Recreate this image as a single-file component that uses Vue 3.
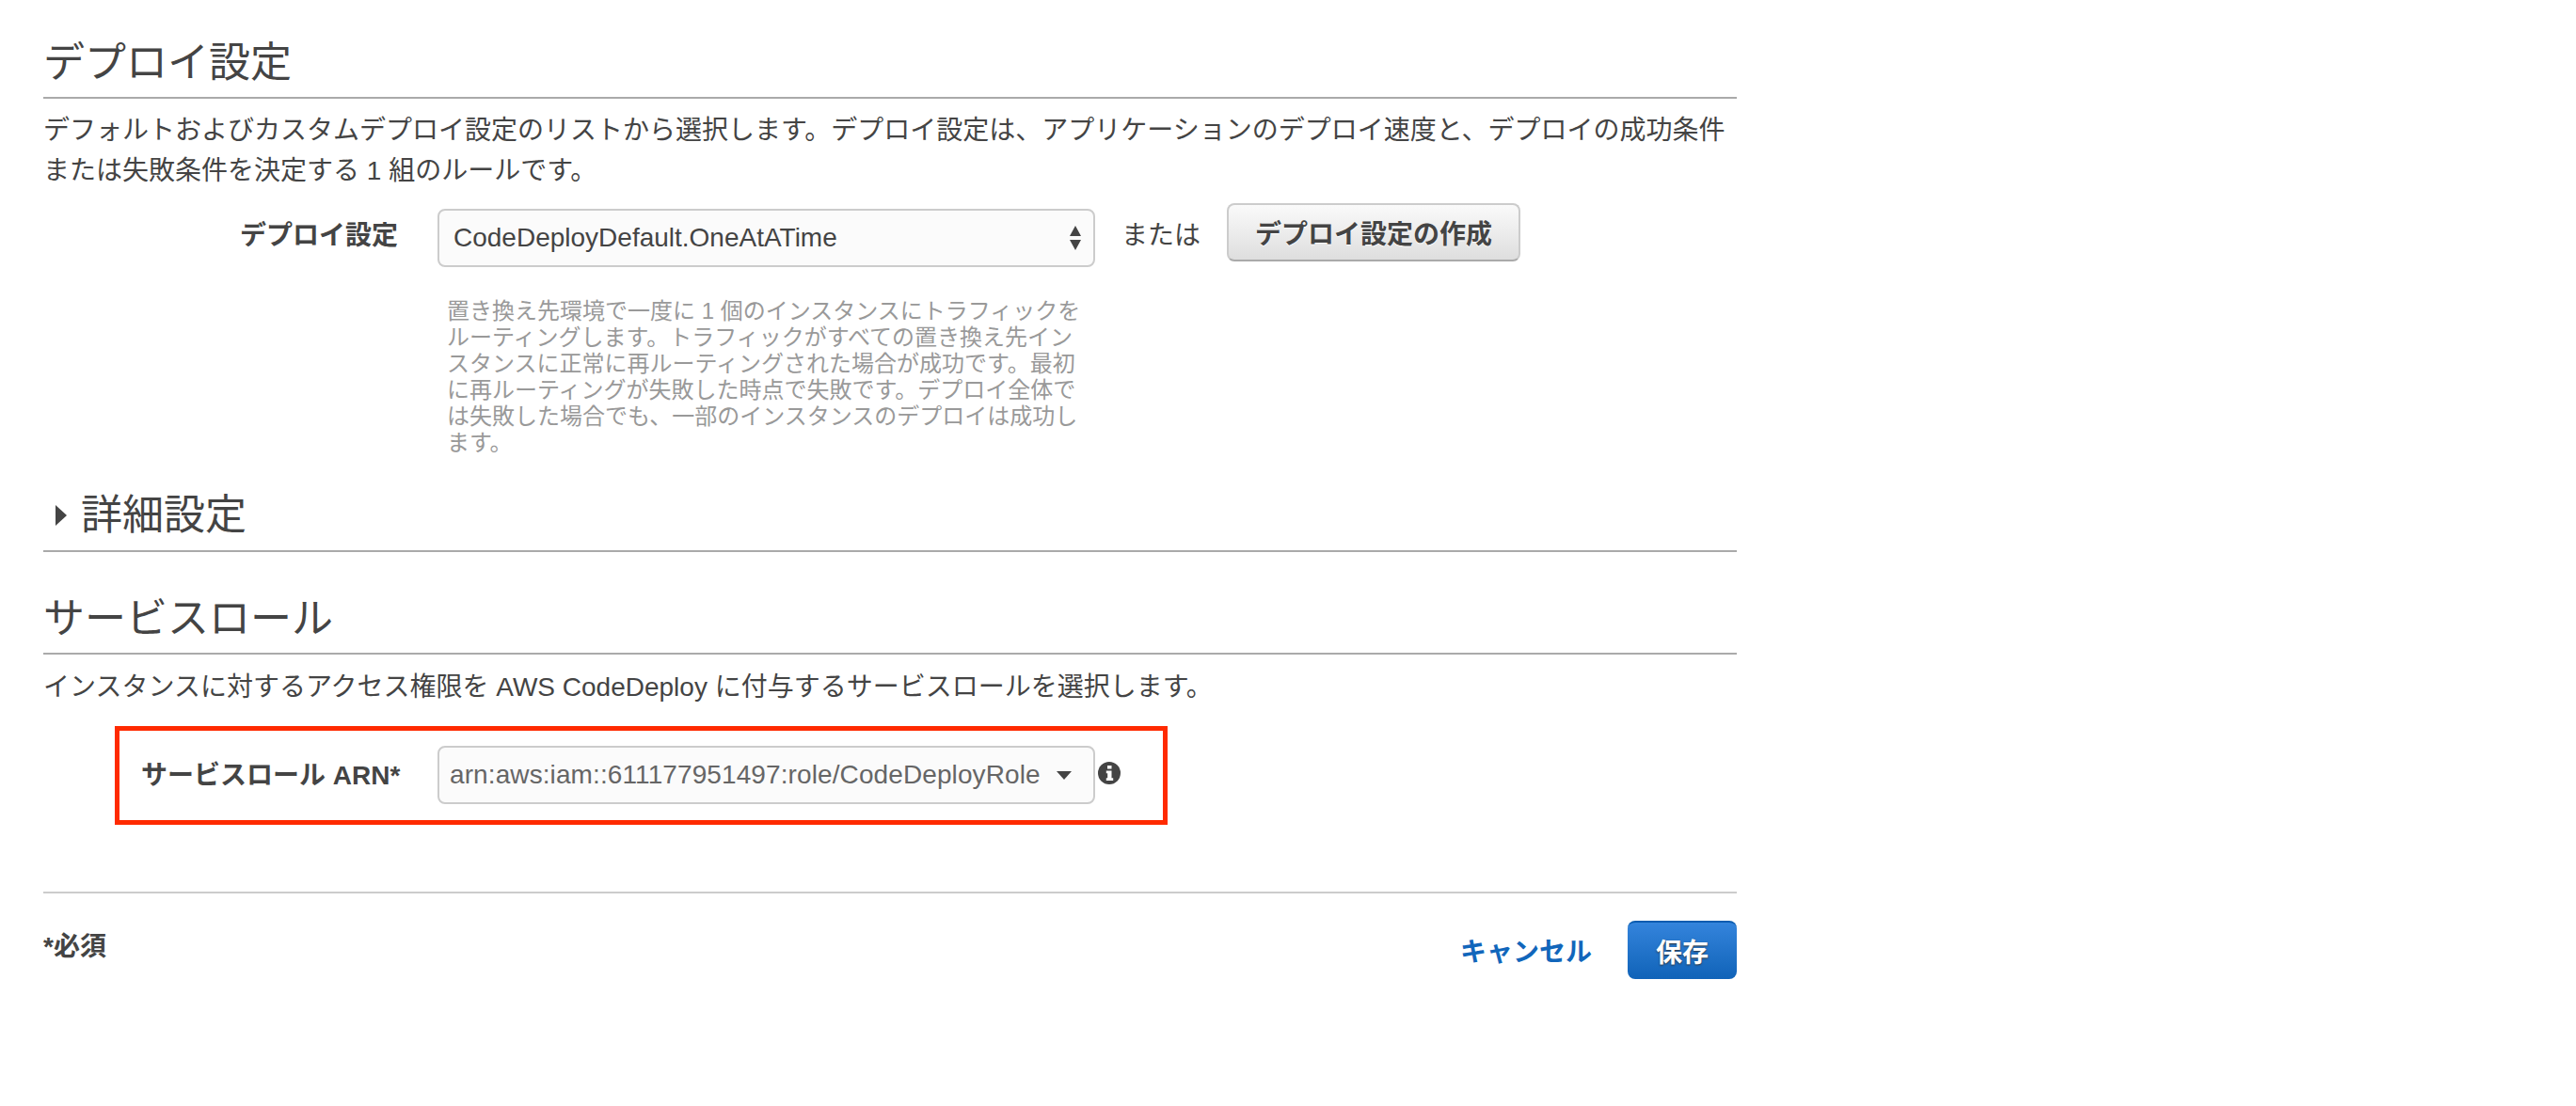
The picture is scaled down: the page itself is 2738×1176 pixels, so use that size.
<script setup>
const hint = [
  '置き換え先環境で一度に 1 個のインスタンスにトラフィックを',
  'ルーティングします。トラフィックがすべての置き換え先イン',
  'スタンスに正常に再ルーティングされた場合が成功です。最初',
  'に再ルーティングが失敗した時点で失敗です。デプロイ全体で',
  'は失敗した場合でも、一部のインスタンスのデプロイは成功し',
  'ます。',
]
</script>

<template>
  <main class="page">
    <h2 class="heading first">デプロイ設定</h2>
    <p class="desc">デフォルトおよびカスタムデプロイ設定のリストから選択します。デプロイ設定は、アプリケーションのデプロイ速度と、デプロイの成功条件<br />または失敗条件を決定する 1 組のルールです。</p>

    <div class="row config-row">
      <label class="label">デプロイ設定</label>
      <div class="select">
        <span class="select-text dark">CodeDeployDefault.OneAtATime</span>
        <svg class="updown" width="12" height="26" viewBox="0 0 12 26"><path d="M6 0l6 11H0zM6 26L0 15h12z" fill="#444" /></svg>
      </div>
      <span class="or">または</span>
      <button class="btn">デプロイ設定の作成</button>
    </div>
    <div class="hint"><div v-for="line in hint" :key="line">{{ line }}</div></div>

    <h2 class="heading adv">
      <svg class="caret" width="12" height="22" viewBox="0 0 12 22"><path d="M0 0l12 11L0 22z" fill="#444" /></svg>
      <span>詳細設定</span>
    </h2>

    <h2 class="heading role">サービスロール</h2>
    <p class="desc single">インスタンスに対するアクセス権限を AWS CodeDeploy に付与するサービスロールを選択します。</p>

    <div class="highlight">
      <label class="label arn">サービスロール ARN*</label>
      <div class="select arn-select">
        <span class="select-text grey">arn:aws:iam::611177951497:role/CodeDeployRole</span>
        <svg width="16" height="9" viewBox="0 0 16 9"><path d="M0 0h16L8 9z" fill="#444" /></svg>
      </div>
      <svg class="info" width="24" height="24" viewBox="0 0 24 24">
        <circle cx="12" cy="12" r="12" fill="#444" />
        <path d="M10 4h4.5v3.5H10zM8.8 9.5h5.7v7.7h1.7V20H8.8v-2.8h1.4v-4.9H8.8z" fill="#fff" />
      </svg>
    </div>

    <footer class="footer">
      <strong class="req">*必須</strong>
      <div class="actions">
        <a class="cancel">キャンセル</a>
        <button class="save">保存</button>
      </div>
    </footer>
  </main>
</template>

<style>
html, body { background: #fff; }
</style>

<style scoped>
.page {
  box-sizing: border-box;
  width: 1800px;
  height: 1176px;
  margin-left: 46px;
  color: #444;
  font-family: "Liberation Sans", "Noto Sans CJK JP", sans-serif;
  font-size: 28px;
}
.heading {
  margin: 0;
  font-weight: 400;
  font-size: 44px;
  line-height: 60px;
  padding-bottom: 6px;
  border-bottom: 2px solid #aaa;
  display: flex;
  align-items: center;
}
.first { padding-top: 37px; }
.desc {
  margin: 12px 0 0;
  line-height: 43px;
  white-space: nowrap;
}
.row { display: flex; align-items: flex-start; }
.config-row { margin-top: 13px; height: 68px; }
.label {
  width: 377px;
  margin-right: 42px;
  flex: none;
  text-align: right;
  font-weight: 700;
  line-height: 38px;
}
.config-row .label { margin-top: 16px; }
.select {
  box-sizing: border-box;
  width: 699px;
  height: 62px;
  flex: none;
  display: flex;
  align-items: center;
  justify-content: space-between;
  border: 2px solid #ccc;
  border-radius: 8px;
  background: #fbfbfb;
  padding: 0 13px 0 15px;
}
.config-row .select { margin-top: 6px; }
.select-text { font-size: 28px; white-space: nowrap; }
.grey { color: #666; letter-spacing: .1px; }
.or { margin: 16px 28px 0 28px; line-height: 38px; }
.btn {
  box-sizing: border-box;
  width: 312px;
  height: 62px;
  border: 2px solid #ccc;
  border-bottom-color: #aaa;
  border-radius: 8px;
  background: linear-gradient(#fafafa, #dedede);
  color: #444;
  font: 700 28px "Liberation Sans", "Noto Sans CJK JP", sans-serif;
  text-shadow: 0 1px 1px #fff;
  padding: 0;
}
.hint {
  margin: 33px 0 0 429px;
  font-size: 24px;
  line-height: 28px;
  color: #999;
  white-space: nowrap;
}
.adv { margin-top: 33px; padding-bottom: 7px; }
.caret { margin: 0 15px 0 13px; }
.role { margin-top: 41px; }
.single { margin-top: 13px; }
.highlight {
  box-sizing: border-box;
  display: flex;
  align-items: center;
  width: 1119px;
  height: 105px;
  margin: 20px 0 0 76px;
  border: 5px solid #ff2a00;
  padding-left: 23px;
}
.arn {
  width: auto;
  margin: 0;
  flex: 0 0 315px;
  text-align: left;
  white-space: nowrap;
}
.arn-select {
  margin-top: -1px;
  padding: 0 23px 0 11px;
}
.info { margin: -5px 0 0 3px; flex: none; }
.footer {
  border-top: 2px solid #ccc;
  margin-top: 71px;
  display: flex;
  justify-content: space-between;
  align-items: flex-start;
  padding-top: 29px;
}
.req { line-height: 56px; }
.actions { display: flex; align-items: center; gap: 38px; }
.cancel { color: #1166bb; font-weight: 700; }
.save {
  box-sizing: border-box;
  width: 116px;
  height: 62px;
  border: none;
  border-top: 2px solid #0a5cb0;
  border-radius: 8px;
  background: linear-gradient(#3484dc, #1063b8);
  color: #fff;
  font: 700 28px "Liberation Sans", "Noto Sans CJK JP", sans-serif;
  text-shadow: 0 1px 2px #333;
  padding: 0;
}
</style>
